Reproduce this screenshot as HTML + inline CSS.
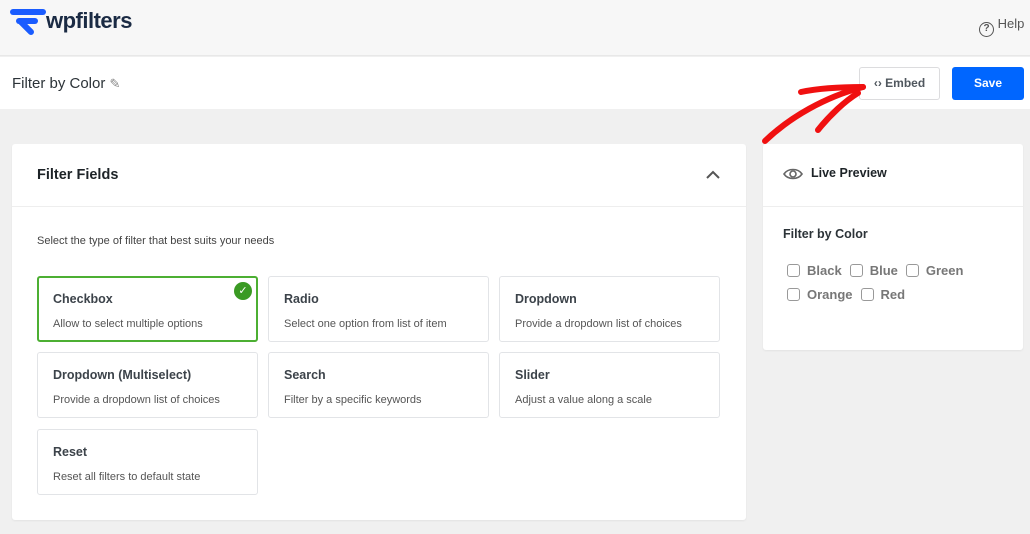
<!DOCTYPE html>
<html><head><style>
*{margin:0;padding:0;box-sizing:border-box}
body{width:1030px;height:534px;overflow:hidden;background:#f0f0f0;font-family:"Liberation Sans",sans-serif;position:relative}
.a{position:absolute}
.top{left:0;top:0;width:1030px;height:56px;background:#f7f7f7;border-bottom:1px solid #e8e8e8}
.sub{left:0;top:57px;width:1030px;height:52px;background:#fff}
.card{background:#fff;border-radius:3px;box-shadow:0 1px 2px rgba(0,0,0,.06)}
.opt{position:absolute;width:221px;height:66px;border:1px solid #e2e4e7;border-radius:3px;background:#fff;padding:15px 0 0 15px}
.opt b{display:block;font-size:12.5px;color:#3c434a;margin-bottom:8px}
.opt span{font-size:11px;color:#555}
.cb{display:inline-block;width:13px;height:13px;border:1px solid #999;border-radius:3px;vertical-align:-2px;margin-right:7px}
.lab{font-size:13px;font-weight:bold;color:#777;margin-right:8px}
</style></head><body>
<div class="a top"></div>
<svg class="a" style="left:10px;top:8px" width="36" height="30" viewBox="0 0 36 30"><path d="M3 4h30" stroke="#1a5cff" stroke-width="6" stroke-linecap="round"/><path d="M9 13h16" stroke="#1a5cff" stroke-width="6" stroke-linecap="round"/><path d="M11 14l10 10" stroke="#1a5cff" stroke-width="6" stroke-linecap="round"/></svg>
<div class="a" style="left:46px;top:8px;font-size:22px;font-weight:bold;color:#1b2b44;letter-spacing:-0.5px">wpfilters</div>
<div class="a" style="left:979px;top:16px;font-size:13px;color:#555"><span style="display:inline-block;width:15px;height:15px;border:1.5px solid #555;border-radius:50%;font-size:10px;text-align:center;line-height:12px;font-weight:bold;vertical-align:-3px">?</span> Help</div>
<div class="a sub"></div>
<div class="a" style="left:12px;top:75px;font-size:15px;color:#2c3338">Filter by Color <span style="font-size:13px;color:#888">✎</span></div>
<div class="a" style="left:859px;top:67px;width:81px;height:33px;border:1px solid #dcdcde;border-radius:3px;background:#fff;font-size:12px;font-weight:bold;color:#50575e;text-align:center;line-height:31px">‹› Embed</div>
<div class="a" style="left:952px;top:67px;width:72px;height:33px;background:#0066ff;border-radius:3px;color:#fff;font-size:12px;font-weight:bold;text-align:center;line-height:33px">Save</div>
<svg class="a" style="left:750px;top:75px" width="125" height="75"><path d="M15 66 C40 42 75 22 113 12" stroke="#f01010" stroke-width="6" fill="none" stroke-linecap="round"/><path d="M51 17 C70 13 95 12 113 12" stroke="#f01010" stroke-width="6" fill="none" stroke-linecap="round"/><path d="M68 55 C80 40 95 26 108 18" stroke="#f01010" stroke-width="6" fill="none" stroke-linecap="round"/></svg>
<div class="a card" style="left:12px;top:144px;width:734px;height:376px"></div>
<div class="a" style="left:12px;top:206px;width:734px;height:1px;background:#eee"></div>
<div class="a" style="left:37px;top:167px;font-size:14.5px;font-weight:bold;color:#1d2327">Filter Fields</div>
<svg class="a" style="left:705px;top:169px" width="16" height="12"><path d="M2 9l6-6 6 6" stroke="#555" stroke-width="2" fill="none"/></svg>
<div class="a" style="left:37px;top:235px;font-size:11px;color:#444">Select the type of filter that best suits your needs</div>
<div class="opt" style="left:37px;top:276px;border:2px solid #4caf32;padding:14px 0 0 14px"><b>Checkbox</b><span>Allow to select multiple options</span></div>
<div class="a" style="left:234px;top:282px;width:18px;height:18px;border-radius:50%;background:#3a9a23;color:#fff;font-size:11px;text-align:center;line-height:18px">✓</div>
<div class="opt" style="left:268px;top:276px"><b>Radio</b><span>Select one option from list of item</span></div>
<div class="opt" style="left:499px;top:276px"><b>Dropdown</b><span>Provide a dropdown list of choices</span></div>
<div class="opt" style="left:37px;top:352px"><b>Dropdown (Multiselect)</b><span>Provide a dropdown list of choices</span></div>
<div class="opt" style="left:268px;top:352px"><b>Search</b><span>Filter by a specific keywords</span></div>
<div class="opt" style="left:499px;top:352px"><b>Slider</b><span>Adjust a value along a scale</span></div>
<div class="opt" style="left:37px;top:429px"><b>Reset</b><span>Reset all filters to default state</span></div>
<div class="a card" style="left:763px;top:144px;width:260px;height:206px"></div>
<div class="a" style="left:763px;top:206px;width:260px;height:1px;background:#eee"></div>
<svg class="a" style="left:783px;top:167px" width="20" height="14"><path d="M1 7C5 1 15 1 19 7 15 13 5 13 1 7Z" stroke="#666" stroke-width="1.6" fill="none"/><circle cx="10" cy="7" r="3" stroke="#666" stroke-width="1.6" fill="none"/></svg>
<div class="a" style="left:811px;top:166px;font-size:12.5px;font-weight:bold;color:#1d2327">Live Preview</div>
<div class="a" style="left:783px;top:227px;font-size:12.5px;font-weight:bold;color:#2c3338">Filter by Color</div>
<div class="a" style="left:787px;top:262px"><span class="cb"></span><span class="lab">Black</span><span class="cb"></span><span class="lab">Blue</span><span class="cb"></span><span class="lab">Green</span></div>
<div class="a" style="left:787px;top:286px"><span class="cb"></span><span class="lab">Orange</span><span class="cb"></span><span class="lab">Red</span></div>
</body></html>
